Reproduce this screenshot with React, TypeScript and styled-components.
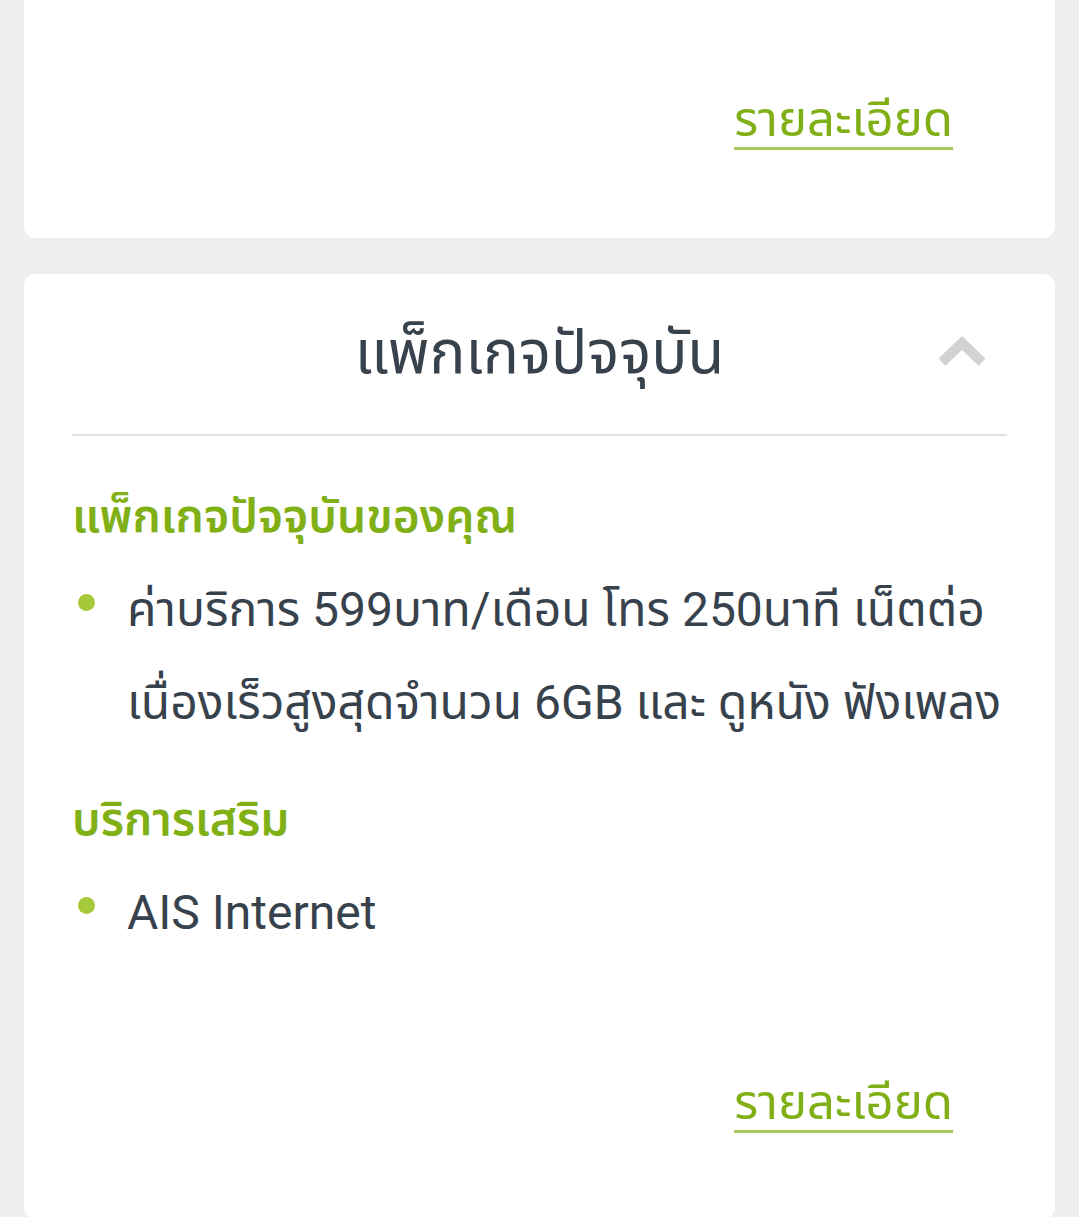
import styled, { createGlobalStyle } from "styled-components";

const GlobalStyle = createGlobalStyle`
  html, body {
    margin: 0;
    padding: 0;
    background: #efefef;
  }
  body {
    font-family: "Roboto", "Noto Sans Thai", "Noto Sans", sans-serif;
    color: #37424c;
  }
`;

const Page = styled.div`
  display: flex;
  flex-direction: column;
  gap: 36px;
  padding: 0 24px;
  height: 1217px;
  overflow: hidden;
`;

const Card = styled.section<{ $flatTop?: boolean }>`
  background: #ffffff;
  border-radius: ${(p) => (p.$flatTop ? "0 0 12px 12px" : "12px")};
  padding: 0 48px;
`;

const CardHeader = styled.div`
  position: relative;
  display: flex;
  justify-content: center;
  align-items: center;
  height: 160px;
  border-bottom: 2px solid #e2e2e2;
`;

const Title = styled.h2`
  margin: 0;
  font-size: 60px;
  font-weight: 400;
  color: #37424c;
`;

const Chevron = styled.svg`
  position: absolute;
  right: 20px;
  top: 62px;
`;

const Body = styled.div`
  padding-top: 40px;
`;

const SectionTitle = styled.h3`
  margin: 0;
  font-size: 46px;
  font-weight: 600;
  color: #80b016;
  line-height: 80px;
`;

const List = styled.ul`
  list-style: none;
  margin: 7px 0 30px;
  padding: 0;
`;

const Item = styled.li`
  position: relative;
  padding-left: 55px;
  font-size: 48px;
  line-height: 93px;
  white-space: nowrap;
  color: #37424c;

  &::before {
    content: "";
    position: absolute;
    left: 6px;
    top: 31px;
    width: 17px;
    height: 17px;
    border-radius: 50%;
    background: #a6c93a;
  }
`;

const Footer = styled.div<{ $top: number; $bottom: number }>`
  display: flex;
  justify-content: flex-end;
  padding: ${(p) => p.$top}px 54px ${(p) => p.$bottom}px 0;
`;

const DetailLink = styled.a`
  font-size: 49px;
  line-height: 1;
  color: #80b016;
  text-decoration: none;
  border-bottom: 3px solid #a8c95e;
  padding-bottom: 3px;
  cursor: pointer;
`;

const App = () => {
  return (
    <>
      <GlobalStyle />
      <Page>
        <Card $flatTop>
          <Footer $top={95} $bottom={88}>
            <DetailLink>รายละเอียด</DetailLink>
          </Footer>
        </Card>
        <Card>
          <CardHeader>
            <Title>แพ็กเกจปัจจุบัน</Title>
            <Chevron width="50" height="32" viewBox="0 0 50 32">
              <path
                d="M5 26 L25 7 L45 26"
                fill="none"
                stroke="#d2d2d2"
                strokeWidth="10"
              />
            </Chevron>
          </CardHeader>
          <Body>
            <SectionTitle>แพ็กเกจปัจจุบันของคุณ</SectionTitle>
            <List>
              <Item>
                ค่าบริการ 599บาท/เดือน โทร 250นาที เน็ตต่อ
                <br />
                เนื่องเร็วสูงสุดจำนวน 6GB และ ดูหนัง ฟังเพลง
              </Item>
            </List>
            <SectionTitle>บริการเสริม</SectionTitle>
            <List>
              <Item>AIS Internet</Item>
            </List>
          </Body>
          <Footer $top={89} $bottom={86}>
            <DetailLink>รายละเอียด</DetailLink>
          </Footer>
        </Card>
      </Page>
    </>
  );
};

export default App;
